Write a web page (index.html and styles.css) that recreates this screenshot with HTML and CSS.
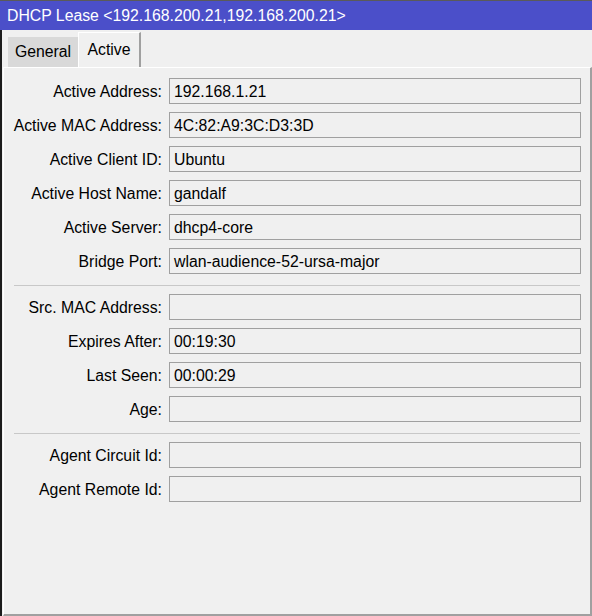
FILE: index.html
```html
<!DOCTYPE html>
<html>
<head>
<meta charset="utf-8">
<link rel="stylesheet" href="styles.css">
</head>
<body>
<div class="window">
  <div class="titlebar">DHCP Lease &lt;192.168.200.21,192.168.200.21&gt;</div>
  <div class="body">
    <div class="tabs">
      <div class="tab">General</div>
      <div class="tab active">Active</div>
    </div>
    <div class="panel">
      <div class="row"><span class="label">Active Address:</span><div class="field">192.168.1.21</div></div>
      <div class="row"><span class="label">Active MAC Address:</span><div class="field">4C:82:A9:3C:D3:3D</div></div>
      <div class="row"><span class="label">Active Client ID:</span><div class="field">Ubuntu</div></div>
      <div class="row"><span class="label">Active Host Name:</span><div class="field">gandalf</div></div>
      <div class="row"><span class="label">Active Server:</span><div class="field">dhcp4-core</div></div>
      <div class="row"><span class="label">Bridge Port:</span><div class="field">wlan-audience-52-ursa-major</div></div>
      <div class="sep"></div>
      <div class="row"><span class="label">Src. MAC Address:</span><div class="field"></div></div>
      <div class="row"><span class="label">Expires After:</span><div class="field">00:19:30</div></div>
      <div class="row"><span class="label">Last Seen:</span><div class="field">00:00:29</div></div>
      <div class="row"><span class="label">Age:</span><div class="field"></div></div>
      <div class="sep"></div>
      <div class="row"><span class="label">Agent Circuit Id:</span><div class="field"></div></div>
      <div class="row"><span class="label">Agent Remote Id:</span><div class="field"></div></div>
    </div>
  </div>
</div>
</body>
</html>
```

FILE: styles.css
```css
* { box-sizing: border-box; }
html, body { margin: 0; padding: 0; }
body {
  font-family: "Liberation Sans", Arial, sans-serif;
  font-size: 15.8px;
  color: #000;
  background: #f0f0f0;
}
.window {
  width: 592px;
  height: 616px;
  display: flex;
  flex-direction: column;
  overflow: hidden;
}
.titlebar {
  height: 30px;
  border-top: 1px solid #5a5a5a;
  background: #4b4fc9;
  color: #fff;
  padding-left: 7px;
  display: flex;
  align-items: center;
  white-space: nowrap;
}
.body {
  flex: 1;
  display: flex;
  flex-direction: column;
  border-left: 2px solid #1c1c1c;
  background: #f0f0f0;
}
.tabs {
  height: 37px;
  display: flex;
  align-items: flex-end;
  padding-left: 6px;
}
.tab {
  height: 30px;
  width: 70px;
  background: #d9d9d9;
  display: flex;
  align-items: center;
  justify-content: center;
}
.tab.active {
  height: 35px;
  width: 63px;
  background: #f0f0f0;
  border-top: 1px solid #fff;
  border-left: 1px solid #fff;
  border-right: 2px solid #a0a0a0;
}
.panel {
  flex: 1;
  display: flex;
  flex-direction: column;
  margin-left: 1px;
  border-top: 1px solid #fff;
  border-left: 1px solid #fff;
  border-right: 2px solid #a0a0a0;
  border-bottom: 2px solid #a0a0a0;
  padding: 10px 9px 0 0;
}
.row {
  display: flex;
  align-items: center;
  margin-bottom: 8px;
}
.label {
  width: 158px;
  margin-right: 7px;
  padding-top: 2px;
  text-align: right;
  white-space: nowrap;
}
.field {
  flex: 1;
  height: 26px;
  border: 1px solid #a0a0a0;
  padding: 2px 4px 0 4px;
  display: flex;
  align-items: center;
  white-space: nowrap;
}
.sep {
  height: 1px;
  flex: none;
  background: #c8c8c8;
  margin: 3px 1px 8px 10px;
}
```
